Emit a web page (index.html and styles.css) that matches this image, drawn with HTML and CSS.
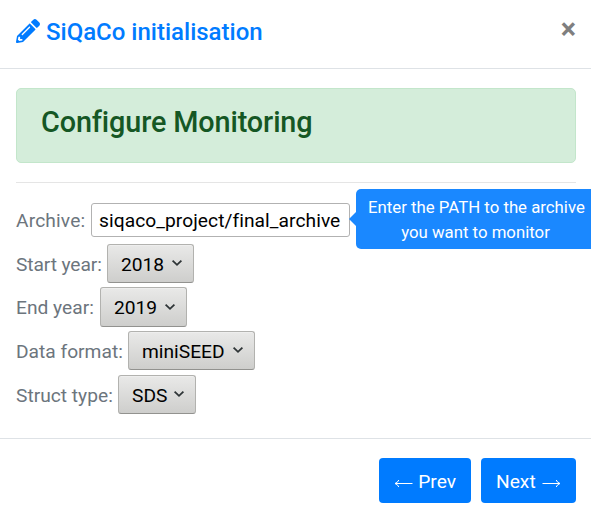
FILE: index.html
```html
<!DOCTYPE html>
<html lang="en">
<head>
<meta charset="utf-8">
<title>SiQaCo initialisation</title>
<link rel="stylesheet" href="styles.css">
</head>
<body>
<div class="modal">
  <header class="modal-header">
    <h5 class="modal-title">
      <svg class="pencil" viewBox="0 0 512 512" aria-hidden="true"><path fill="currentColor" d="M497.9 142.1l-46.1 46.1c-4.7 4.7-12.3 4.7-17 0l-111-111c-4.7-4.7-4.7-12.3 0-17l46.1-46.1c18.7-18.7 49.1-18.7 67.9 0l60.1 60.1c18.8 18.7 18.8 49.1 0 67.9zM284.2 99.8L21.6 362.4.4 483.9c-2.9 16.4 11.4 30.6 27.8 27.8l121.5-21.3 262.6-262.6c4.7-4.7 4.7-12.3 0-17l-111-111c-4.8-4.7-12.4-4.7-17.1 0zM124.1 339.9c-5.5-5.5-5.5-14.3 0-19.8l154-154c5.5-5.5 14.3-5.5 19.8 0s5.5 14.3 0 19.8l-154 154c-5.5 5.5-14.3 5.5-19.8 0zM88 424h48v36.3l-64.5 11.3-31.1-31.1L51.7 376H88v48z"/></svg>
      <span>SiQaCo initialisation</span>
    </h5>
    <button class="close" type="button" aria-label="Close">×</button>
  </header>
  <main class="modal-body">
    <div class="alert"><h4 class="alert-title">Configure Monitoring</h4></div>
    <hr class="rule">
    <div class="fields">
      <div class="field field-archive">
        <span class="label">Archive:</span>
        <div class="path-wrap">
          <div class="path">siqaco_project/final_archive</div>
          <div class="tip">Enter the PATH to the archive<br>you want to monitor</div>
        </div>
      </div>
      <div class="field field-start">
        <span class="label">Start year:</span>
        <button class="select" type="button">2018<svg class="chevron" viewBox="0 0 12 8"><path d="M1.6 1.6L6 5.8l4.4-4.2"/></svg></button>
      </div>
      <div class="field field-end">
        <span class="label">End year:</span>
        <button class="select" type="button">2019<svg class="chevron" viewBox="0 0 12 8"><path d="M1.6 1.6L6 5.8l4.4-4.2"/></svg></button>
      </div>
      <div class="field field-format">
        <span class="label">Data format:</span>
        <button class="select" type="button">miniSEED<svg class="chevron" viewBox="0 0 12 8"><path d="M1.6 1.6L6 5.8l4.4-4.2"/></svg></button>
      </div>
      <div class="field field-struct">
        <span class="label">Struct type:</span>
        <button class="select" type="button">SDS<svg class="chevron" viewBox="0 0 12 8"><path d="M1.6 1.6L6 5.8l4.4-4.2"/></svg></button>
      </div>
    </div>
  </main>
  <footer class="modal-footer">
    <button class="btn btn-prev" type="button"><svg class="arrow" viewBox="0 0 19 9"><path d="M18.5 4.5H1M4.8 1Q3.8 3.6 1 4.5Q3.8 5.4 4.8 8"/></svg><span>Prev</span></button>
    <button class="btn btn-next" type="button"><span>Next</span><svg class="arrow" viewBox="0 0 19 9"><path d="M.5 4.5H18M14.2 1Q15.2 3.6 18 4.5Q15.2 5.4 14.2 8"/></svg></button>
  </footer>
</div>
</body>
</html>
```
FILE: styles.css
```css
* { box-sizing: border-box; }
body {
  margin: 0;
  background: #fff;
  font-family: Roboto, sans-serif;
  font-size: 19.2px;
  line-height: 1.5;
  overflow: hidden;
}
h4, h5 { margin: 0; font-weight: 500; }
button { font: inherit; margin: 0; }
.modal { height: 513px; display: flex; flex-direction: column; }
.modal-header {
  height: 69px;
  padding: 14px 15px 0 16px;
  display: flex;
  justify-content: space-between;
  align-items: flex-start;
  border-bottom: 1px solid #dee2e6;
}
.modal-title {
  display: flex;
  align-items: center;
  gap: 6px;
  color: #007bff;
  font-size: 24px;
  line-height: 36px;
}
.pencil { width: 24px; height: 24px; margin-top: -2px; }
.close {
  padding: 0;
  border: 0;
  background: none;
  color: #7f7f7f;
  font-size: 28.8px;
  font-weight: 700;
  line-height: 30px;
}
.modal-body { height: 369px; padding: 19px 15px 0 16px; }
.alert {
  height: 75px;
  padding: 15px 24px;
  background: #d4edda;
  border: 1px solid #c3e6cb;
  border-radius: 5px;
}
.alert-title {
  color: #155724;
  font-size: 28.8px;
  line-height: 36px;
  letter-spacing: -.12px;
  font-variant-ligatures: common-ligatures;
}
.rule { height: 1px; margin: 19px 0 20px; border: 0; background: #e5e5e5; }
.fields {
  display: grid;
  grid-template-rows: 41px 43px 44px 44px 39px;
  align-items: start;
}
.field { display: flex; align-items: center; }
.label { color: #6c757d; white-space: nowrap; line-height: 29px; padding-top: 1px; }
.field-archive .label { width: 75px; letter-spacing: .15px; }
.field-start .label { width: 91px; letter-spacing: -.1px; }
.field-end .label { width: 84px; }
.field-format .label { width: 112px; }
.field-struct .label { width: 102px; }
.path-wrap { position: relative; }
.path {
  width: 259px;
  height: 34px;
  padding: 2px 7px;
  border: 1px solid #b2b2b2;
  border-radius: 3px;
  background: #fff;
  color: #000;
  line-height: 29px;
  letter-spacing: .06px;
  font-variant-ligatures: common-ligatures;
  white-space: nowrap;
  overflow: hidden;
}
.tip {
  position: absolute;
  left: 265px;
  top: -14px;
  width: 240px;
  height: 60px;
  padding: 6px 13px 6px 12px;
  border-radius: 5px;
  background: #1a88ff;
  color: #fff;
  font-size: 16.8px;
  line-height: 25px;
  text-align: center;
  white-space: nowrap;
}
.tip::before {
  content: "";
  position: absolute;
  left: -7px;
  top: 23px;
  border: solid transparent;
  border-width: 7px 7px 7px 0;
  border-right-color: #1a88ff;
}
.select {
  height: 39px;
  padding: 3px 10px 0 13px;
  display: flex;
  align-items: center;
  justify-content: space-between;
  border: 1px solid #b2b2af;
  border-bottom-color: #92928f;
  border-radius: 3px;
  background: linear-gradient(#e9e9e8, #cececc);
  box-shadow: inset 0 1px rgba(255, 255, 255, .25);
  color: #000;
}
.field-start .select { width: 87px; }
.field-end .select { width: 87px; height: 40px; padding-top: 2px; }
.field-format .select { width: 127px; }
.field-struct .select { width: 78px; }
.chevron { width: 12px; height: 8px; margin-top: -5px; }
.field-end .chevron { margin-top: -3px; }
.chevron path { fill: none; stroke: #2e3436; stroke-width: 1.8; }
.modal-footer {
  height: 75px;
  padding: 19px 15px 0;
  display: flex;
  justify-content: flex-end;
  gap: 10px;
  border-top: 1px solid #dee2e6;
}
.btn {
  height: 45px;
  padding: 2px 15px 0;
  display: flex;
  align-items: center;
  justify-content: space-between;
  border: 0;
  border-radius: 4px;
  background: #007bff;
  color: #fff;
}
.btn-prev { width: 92px; }
.btn-next { width: 95px; }
.btn span { position: relative; top: 1px; }
.arrow { width: 19px; height: 9px; margin-top: 4px; }
.arrow path { fill: none; stroke: #fff; stroke-width: 1; }
```
